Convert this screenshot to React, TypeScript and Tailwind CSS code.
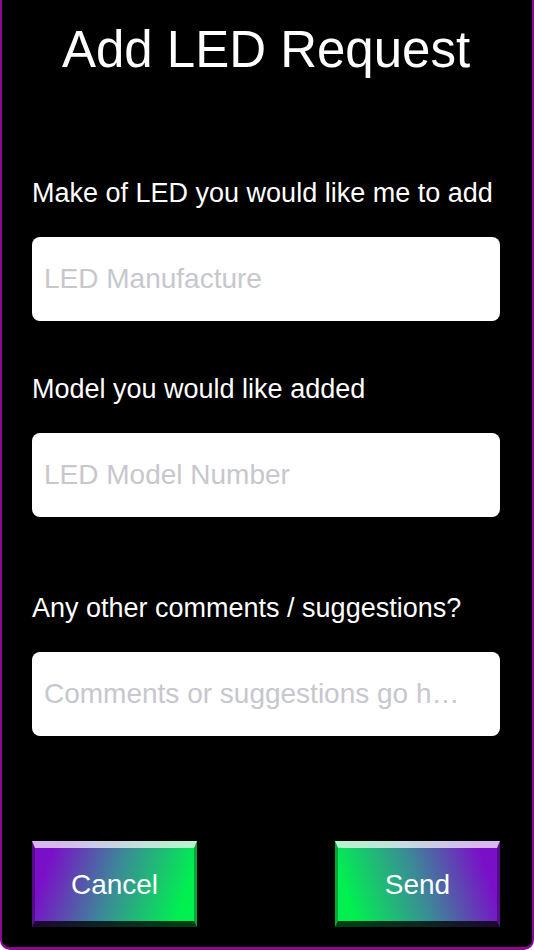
import React from 'react';

const font = { fontFamily: '"Liberation Sans", Arial, Helvetica, sans-serif' };

interface FieldProps {
  label: string;
  placeholder: string;
  labelGap: string;
}

const Field: React.FC<FieldProps> = ({ label, placeholder, labelGap }) => (
  <div className={`flex flex-col ${labelGap}`}>
    <label className="text-[27px] leading-none text-white whitespace-nowrap">{label}</label>
    <input
      type="text"
      placeholder={placeholder}
      className="mt-[30px] h-[84px] w-full rounded-[8px] bg-white pl-[12px] pr-[26px] text-[28px] text-black truncate outline-none placeholder:text-[#c7c7cd]"
    />
  </div>
);

interface BevelButtonProps {
  label: string;
  reverse?: boolean;
}

const BevelButton: React.FC<BevelButtonProps> = ({ label, reverse = false }) => (
  <button
    className={`h-[86px] w-[165px] flex items-center justify-center border-t-[7px] border-b-[6px] border-x-[3px] border-t-white/70 border-b-black/75 border-x-black/30 text-[28px] text-white ${
      reverse
        ? 'bg-[linear-gradient(70deg,#00f050_12%,#3a8c96_50%,#7a0fc8_88%)]'
        : 'bg-[linear-gradient(110deg,#7a0fc8_12%,#3a8c96_50%,#00f050_88%)]'
    }`}
    style={{ backgroundOrigin: 'border-box' }}
  >
    {label}
  </button>
);

export default function App() {
  return (
    <div className="h-[950px] w-[534px] bg-white" style={font}>
      <div className="h-full flex flex-col bg-black border-x-2 border-b-[3px] border-[#8a0a92] rounded-b-[10px] pl-[30px] pr-[32px]">
        <h1 className="pt-[24px] text-[51px] leading-none text-white text-center whitespace-nowrap">
          Add LED Request
        </h1>

        <Field label="Make of LED you would like me to add" placeholder="LED Manufacture" labelGap="mt-[105px]" />
        <Field label="Model you would like added" placeholder="LED Model Number" labelGap="mt-[55px]" />
        <Field
          label="Any other comments / suggestions?"
          placeholder="Comments or suggestions go here..."
          labelGap="mt-[78px]"
        />

        <div className="mt-[105px] flex justify-between">
          <BevelButton label="Cancel" />
          <BevelButton label="Send" reverse />
        </div>
      </div>
    </div>
  );
}
